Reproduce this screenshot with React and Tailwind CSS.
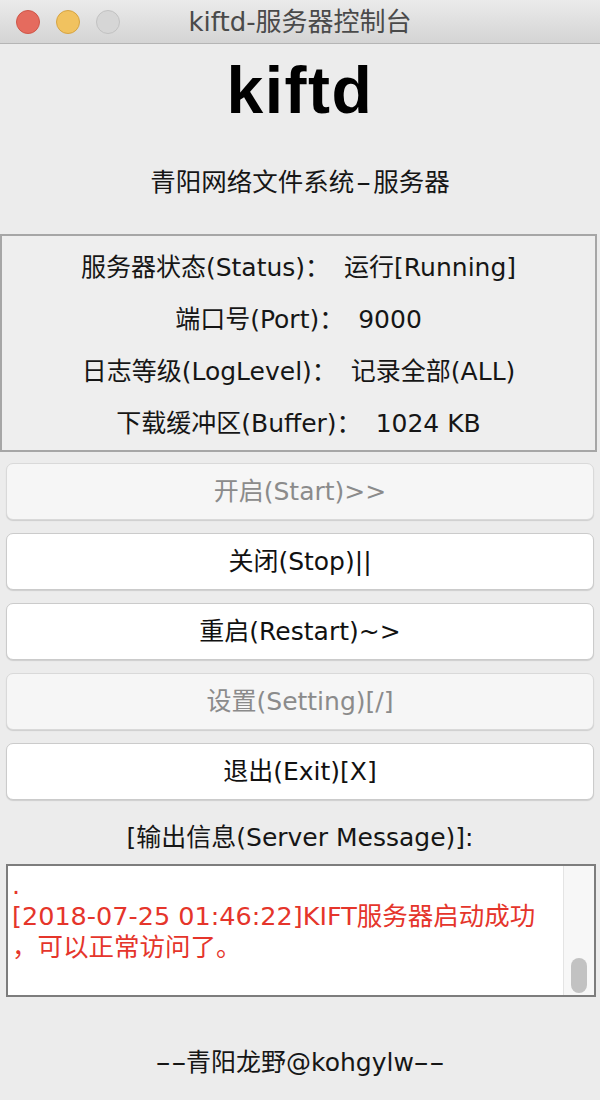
import React from "react";

const FONT = "font-['DejaVu_Sans','Noto_Sans_CJK_SC',sans-serif]";

function Btn({ label, disabled }) {
  return (
    <div
      className={
        "mx-[6px] h-[57px] flex items-center justify-center rounded-[7px] border text-[25px] leading-[30px] shadow-[0_1px_1px_rgba(0,0,0,0.13)] " +
        (disabled
          ? "bg-[#f6f6f6] border-[#d9d9d9] text-[#8b8b8b]"
          : "bg-white border-[#cbcbcb] text-[#111111]")
      }
    >
      {label}
    </div>
  );
}

function InfoLine({ label, value }) {
  return (
    <div className="h-[52px] flex items-center justify-center text-[25px] text-[#161616]">
      <span>{label}</span>
      <span className="ml-[14px]">{value}</span>
    </div>
  );
}

export default function App() {
  return (
    <div className={"w-[600px] min-h-[1100px] bg-[#ececec] flex flex-col " + FONT}>
      {/* title bar */}
      <div className="h-[44px] grid grid-cols-[1fr_auto_1fr] items-center bg-gradient-to-b from-[#ebebeb] to-[#d4d4d4] border-b border-[#b5b5b5]">
        <div className="flex items-center gap-[16px] pl-[16px]">
          <div className="w-[24px] h-[24px] rounded-full bg-[#e56b5e] border border-[#cf5648]" />
          <div className="w-[24px] h-[24px] rounded-full bg-[#f1c25f] border border-[#d6a443]" />
          <div className="w-[24px] h-[24px] rounded-full bg-[#d6d6d6] border border-[#c2c2c2]" />
        </div>
        <div className="text-[26px] leading-[30px] text-[#4a4a4a]">kiftd-服务器控制台</div>
        <div />
      </div>

      {/* big title */}
      <div className="mt-[14px] h-[64px] flex justify-center font-['Liberation_Sans',sans-serif] font-bold text-[66px] leading-[64px] tracking-[1.5px] text-black">
        kiftd
      </div>

      <div className="mt-[45px] h-[30px] flex justify-center text-[25.5px] leading-[30px] text-[#161616]">
        <span>青阳网络文件系统</span>
        <span className="mx-[5px] inline-block scale-x-[1.7]">-</span>
        <span>服务器</span>
      </div>

      {/* info panel */}
      <div className="mt-[37px] mr-[3px] border-2 border-[#a6a6a6] bg-[#eeeeee] pt-[6px] pb-0 flex flex-col">
        <InfoLine label="服务器状态(Status)：" value="运行[Running]" />
        <InfoLine label="端口号(Port)：" value="9000" />
        <InfoLine label="日志等级(LogLevel)：" value="记录全部(ALL)" />
        <InfoLine label="下载缓冲区(Buffer)：" value="1024 KB" />
      </div>

      {/* buttons */}
      <div className="mt-[11px] flex flex-col gap-[13px]">
        <Btn label="开启(Start)>>" disabled />
        <Btn label="关闭(Stop)||" />
        <Btn label="重启(Restart)~>" />
        <Btn label="设置(Setting)[/]" disabled />
        <Btn label="退出(Exit)[X]" />
      </div>

      <div className="mt-[23px] h-[30px] flex justify-center text-[25px] leading-[30px] text-[#161616]">
        [输出信息(Server Message)]:
      </div>

      {/* output area */}
      <div className="mt-[11px] ml-[6px] mr-[4px] h-[133px] border-2 border-[#7d7d7d] bg-white flex overflow-hidden">
        <div className="flex-1 pl-[4px] pt-[4px] text-[25.5px] leading-[31px] text-[#e5352b] whitespace-nowrap overflow-hidden">
          <div>.</div>
          <div>[2018-07-25 01:46:22]KIFT服务器启动成功</div>
          <div>，可以正常访问了。</div>
        </div>
        <div className="w-[31px] bg-[#f7f7f7] border-l border-[#e4e4e4] flex flex-col justify-end items-center pb-[2px]">
          <div className="w-[16px] h-[35px] rounded-full bg-[#c2c2c2]" />
        </div>
      </div>

      <div className="mt-[51px] h-[30px] flex justify-center text-[25px] leading-[30px] text-[#161616]">
        <span className="inline-block w-[31px] text-center">
          <span className="inline-block scale-x-[1.75]">--</span>
        </span>
        <span>青阳龙野@kohgylw</span>
        <span className="inline-block w-[31px] text-center">
          <span className="inline-block scale-x-[1.75]">--</span>
        </span>
      </div>
    </div>
  );
}
